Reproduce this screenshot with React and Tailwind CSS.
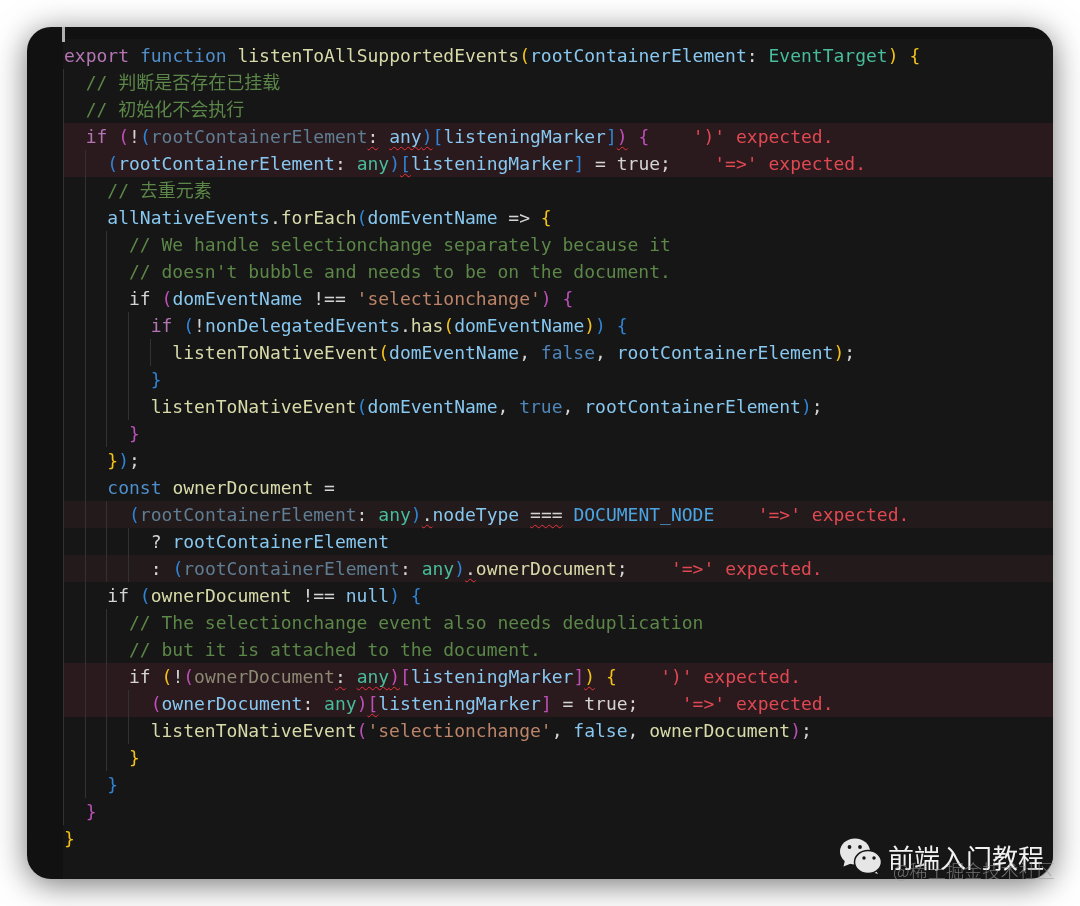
const colors = {
  kw: "text-[#b574b3]",
  blue: "text-[#4f8fce]",
  fn: "text-[#d8daa9]",
  v: "text-[#88c8f0]",
  type: "text-[#47bd9c]",
  dim: "text-[#5f7e93]",
  brown: "text-[#8b8873]",
  str: "text-[#bd8469]",
  w: "text-[#d4d4d4]",
  y: "text-[#f2c21a]",
  m: "text-[#bd4fb8]",
  b: "text-[#2f84d6]",
  bool: "text-[#4f86bb]",
  cst: "text-[#4aa5e2]",
  err: "text-[#e04852]",
  c: "text-[#5c8748]",
};

// [text, colour, squiggle]
const lines = [
  { g: 0, t: [["export", "kw"], [" "], ["function", "blue"], [" "], ["listenToAllSupportedEvents", "fn"], ["(", "y"], ["rootContainerElement", "v"], [": "], ["EventTarget", "type"], [")", "y"], [" "], ["{", "y"]] },
  { g: 1, t: [["// 判断是否存在已挂载", "c"]] },
  { g: 1, t: [["// 初始化不会执行", "c"]] },
  { g: 1, e: "')' expected.", bg: "a", t: [["if", "kw"], [" "], ["(", "m"], ["!"], ["(", "b"], ["rootContainerElement", "dim"], [":", "w", 1], [" "], ["any", "v", 1], [")", "b", 1], ["[", "b"], ["listeningMarker", "v"], ["]", "b"], [")", "m", 1], [" "], ["{", "m"]] },
  { g: 2, e: "'=>' expected.", bg: "a", t: [["(", "b"], ["rootContainerElement", "v"], [": "], ["any", "type"], [")", "b"], ["[", "b", 1], ["listeningMarker", "v"], ["]", "b"], [" = true;"]] },
  { g: 2, t: [["// 去重元素", "c"]] },
  { g: 2, t: [["allNativeEvents", "v"], ["."], ["forEach", "fn"], ["(", "b"], ["domEventName", "v"], [" => "], ["{", "y"]] },
  { g: 3, t: [["// We handle selectionchange separately because it", "c"]] },
  { g: 3, t: [["// doesn't bubble and needs to be on the document.", "c"]] },
  { g: 3, t: [["if "], ["(", "m"], ["domEventName", "v"], [" !== "], ["'selectionchange'", "str"], [")", "m"], [" "], ["{", "m"]] },
  { g: 4, t: [["if", "kw"], [" "], ["(", "b"], ["!"], ["nonDelegatedEvents", "v"], ["."], ["has", "fn"], ["(", "y"], ["domEventName", "v"], [")", "y"], [")", "b"], [" "], ["{", "b"]] },
  { g: 5, t: [["listenToNativeEvent", "fn"], ["(", "y"], ["domEventName", "v"], [", "], ["false", "bool"], [", "], ["rootContainerElement", "v"], [")", "y"], [";"]] },
  { g: 4, t: [["}", "b"]] },
  { g: 4, t: [["listenToNativeEvent", "fn"], ["(", "b"], ["domEventName", "v"], [", "], ["true", "bool"], [", "], ["rootContainerElement", "v"], [")", "b"], [";"]] },
  { g: 3, t: [["}", "m"]] },
  { g: 2, t: [["}", "y"], [")", "b"], [";"]] },
  { g: 2, t: [["const", "blue"], [" "], ["ownerDocument", "fn"], [" = "]] },
  { g: 3, e: "'=>' expected.", bg: "b", t: [["(", "b"], ["rootContainerElement", "dim"], [": "], ["any", "type"], [")", "b"], [".", "w", 1], ["nodeType", "v"], [" "], ["===", "w", 1], [" "], ["DOCUMENT_NODE", "cst"]] },
  { g: 4, t: [["? "], ["rootContainerElement", "v"]] },
  { g: 4, e: "'=>' expected.", bg: "b", t: [[": "], ["(", "b"], ["rootContainerElement", "dim"], [": "], ["any", "type"], [")", "b"], [".", "w", 1], ["ownerDocument", "fn"], [";"]] },
  { g: 2, t: [["if "], ["(", "b"], ["ownerDocument", "fn"], [" !== "], ["null", "v"], [")", "b"], [" "], ["{", "b"]] },
  { g: 3, t: [["// The selectionchange event also needs deduplication", "c"]] },
  { g: 3, t: [["// but it is attached to the document.", "c"]] },
  { g: 3, e: "')' expected.", bg: "a", t: [["if "], ["(", "y"], ["!"], ["(", "m"], ["ownerDocument", "brown"], [":", "w", 1], [" "], ["any", "type", 1], [")", "m", 1], ["[", "m"], ["listeningMarker", "v"], ["]", "m"], [")", "y", 1], [" "], ["{", "y"]] },
  { g: 4, e: "'=>' expected.", bg: "a", t: [["(", "m"], ["ownerDocument", "v"], [": "], ["any", "type"], [")", "m"], ["[", "m", 1], ["listeningMarker", "v"], ["]", "m"], [" = true;"]] },
  { g: 4, t: [["listenToNativeEvent", "fn"], ["(", "m"], ["'selectionchange'", "str"], [", "], ["false", "v"], [", "], ["ownerDocument", "fn"], [")", "m"], [";"]] },
  { g: 3, t: [["}", "y"]] },
  { g: 2, t: [["}", "b"]] },
  { g: 1, t: [["}", "m"]] },
  { g: 0, t: [["}", "y"]] },
];

const rowBg = { a: "bg-[#2a1a1d]", b: "bg-[#231a1b]" };

function CodeLine({ line }) {
  return (
    <div className={`flex h-[27.03px] items-center pl-px leading-[27px] whitespace-pre ${line.bg ? rowBg[line.bg] : ""}`}>
      {Array.from({ length: line.g }).map((_, i) => (
        <span key={i} className="-ml-px mr-px h-full w-[2ch] shrink-0 border-l border-[#323232]" />
      ))}
      <span>
        {line.t.map(([text, color, squiggle], i) => (
          <span
            key={i}
            className={`${colors[color || "w"]} ${squiggle ? "underline decoration-wavy decoration-[#e8333c] decoration-1 underline-offset-[3px] [text-decoration-skip-ink:none]" : ""}`}
          >
            {text}
          </span>
        ))}
        {line.e && <span className={colors.err}>{"    " + line.e}</span>}
      </span>
    </div>
  );
}

function WechatMark() {
  return (
    <svg width="42" height="37" viewBox="0 0 42 37" className="shrink-0">
      <path d="M5 22 L3.5 28.5 L11 25.5 Z" fill="#e6e6e6" />
      <ellipse cx="15" cy="13.5" rx="15" ry="13" fill="#e6e6e6" />
      <path d="M35 31 L38 36 L30 33.5 Z" fill="#e6e6e6" />
      <ellipse cx="28" cy="24" rx="13.5" ry="11.5" fill="#e6e6e6" stroke="#161616" strokeWidth="1.5" />
      <circle cx="9.5" cy="9" r="1.9" fill="#161616" />
      <circle cx="20" cy="9" r="1.9" fill="#161616" />
      <circle cx="24" cy="20" r="1.7" fill="#161616" />
      <circle cx="34" cy="20" r="1.7" fill="#161616" />
    </svg>
  );
}

export default function App() {
  return (
    <div className="h-[906px] w-[1080px] overflow-hidden bg-white p-[27px] blur-[0.5px]">
      <div className="relative h-[852px] w-[1026px] rounded-[24px] bg-[#111111] font-['DejaVu_Sans_Mono','Noto_Sans_CJK_SC',monospace] text-[18px] shadow-[0_5px_32px_rgba(0,0,0,0.55)]">
        <div className="flex h-full flex-col overflow-hidden rounded-[24px]">
          <div className="ml-[36px] mt-[12px] flex-1 bg-[#161616] pt-[3px]">
            {lines.map((line, i) => (
              <CodeLine key={i} line={line} />
            ))}
          </div>
        </div>
        <span className="absolute left-[35px] top-0 h-[15px] w-[3px] bg-[#b0b0b0]" />
        <div className="absolute left-[813px] top-[811px] flex w-[240px] items-start gap-[6px] font-['Noto_Sans_CJK_SC',sans-serif]">
          <WechatMark />
          <span className="mt-[1px] text-[26px] leading-[36px] whitespace-nowrap text-[#f2f2f2]">前端入门教程</span>
        </div>
        <span className="absolute left-[866px] top-[834px] font-['Noto_Sans_CJK_SC',sans-serif] text-[18.2px] leading-[18px] font-light whitespace-nowrap text-[#9a9a9a]/70">
          @稀土掘金技术社区
        </span>
      </div>
    </div>
  );
}
